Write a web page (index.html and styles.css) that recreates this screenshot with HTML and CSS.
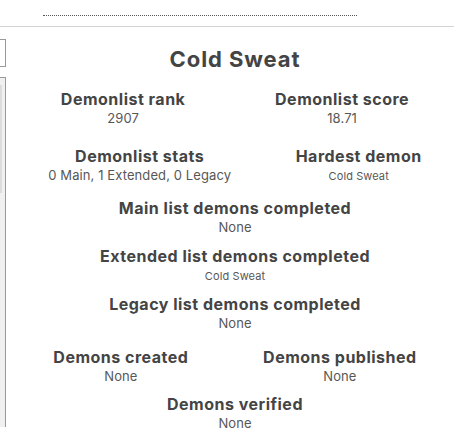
FILE: index.html
```html
<!DOCTYPE html>
<html lang="en">
<head>
    <meta charset="UTF-8">
    <meta name="viewport" content="width=device-width, initial-scale=1.0">
    <title>Cold Sweat - Player</title>
    <link rel="stylesheet" href="styles.css">
</head>
<body>
    <div class="page">
        <div class="top">
            <div class="dots"></div>
        </div>
        <div class="main">
            <div class="sidebar">
                <input class="search" type="text">
                <div class="list">
                    <div class="thumb"></div>
                </div>
            </div>
            <div class="content">
                <h1>Cold Sweat</h1>
                <div class="row first">
                    <div class="stat">
                        <h3>Demonlist rank</h3>
                        <span>2907</span>
                    </div>
                    <div class="stat">
                        <h3>Demonlist score</h3>
                        <span>18.71</span>
                    </div>
                </div>
                <div class="row second">
                    <div class="stat">
                        <h3>Demonlist stats</h3>
                        <span>0 Main, 1 Extended, 0 Legacy</span>
                    </div>
                    <div class="stat">
                        <h3>Hardest demon</h3>
                        <span class="small">Cold Sweat</span>
                    </div>
                </div>
                <div class="stat wide">
                    <h3>Main list demons completed</h3>
                    <span>None</span>
                </div>
                <div class="stat wide">
                    <h3>Extended list demons completed</h3>
                    <span class="small">Cold Sweat</span>
                </div>
                <div class="stat wide">
                    <h3>Legacy list demons completed</h3>
                    <span>None</span>
                </div>
                <div class="row third">
                    <div class="stat">
                        <h3>Demons created</h3>
                        <span>None</span>
                    </div>
                    <div class="stat">
                        <h3>Demons published</h3>
                        <span>None</span>
                    </div>
                </div>
                <div class="stat wide last">
                    <h3>Demons verified</h3>
                    <span>None</span>
                </div>
            </div>
        </div>
    </div>
</body>
</html>
```

FILE: styles.css
```css
body {
    margin: 0;
    font-family: Inter, "Open Sans", sans-serif;
    background-color: white;
    color: #444;
    overflow: hidden;
}
.page {
    width: 454px;
}
.top {
    height: 26px;
    border-bottom: 1px solid #d3d3d3;
    padding-left: 43px;
}
.dots {
    width: 314px;
    padding-top: 15px;
    border-bottom: 1px dotted #555;
}
.main {
    display: flex;
}
.sidebar {
    width: 6px;
    flex-shrink: 0;
    padding-top: 12px;
}
.search {
    display: block;
    width: 6px;
    height: 28px;
    margin: 0;
    padding: 0;
    border: 1px solid #999;
    border-left: none;
    box-sizing: border-box;
}
.list {
    margin-top: 10px;
    height: 350px;
    border: 1px solid #999;
    border-left: none;
    border-bottom: none;
    background-color: #f0f0f0;
    padding-top: 7px;
    box-sizing: border-box;
}
.thumb {
    width: 2px;
    height: 108px;
    background-color: #dcdcdc;
}
.content {
    flex: 1;
    padding-left: 10px;
    text-align: center;
}
h1 {
    font-size: 22px;
    font-weight: 700;
    letter-spacing: 0.9px;
    line-height: 28px;
    margin: 18px 0 16px;
}
.row {
    display: flex;
    justify-content: space-around;
}
.row.first {
    margin-bottom: 19px;
}
.row.second {
    margin-bottom: 14px;
}
.row.third {
    margin-top: 15px;
    margin-bottom: 9px;
}
.stat h3 {
    margin: 0;
    font-size: 16px;
    font-weight: 700;
    letter-spacing: 0.5px;
    line-height: 20px;
}
.stat span {
    display: block;
    font-size: 13px;
    letter-spacing: 0.1px;
    line-height: 18px;
    color: #575757;
}
.stat span.small {
    font-size: 11px;
    line-height: 15px;
    padding-top: 3px;
}
.wide {
    margin-bottom: 10px;
}
.wide.last {
    margin-bottom: 0;
}
```
